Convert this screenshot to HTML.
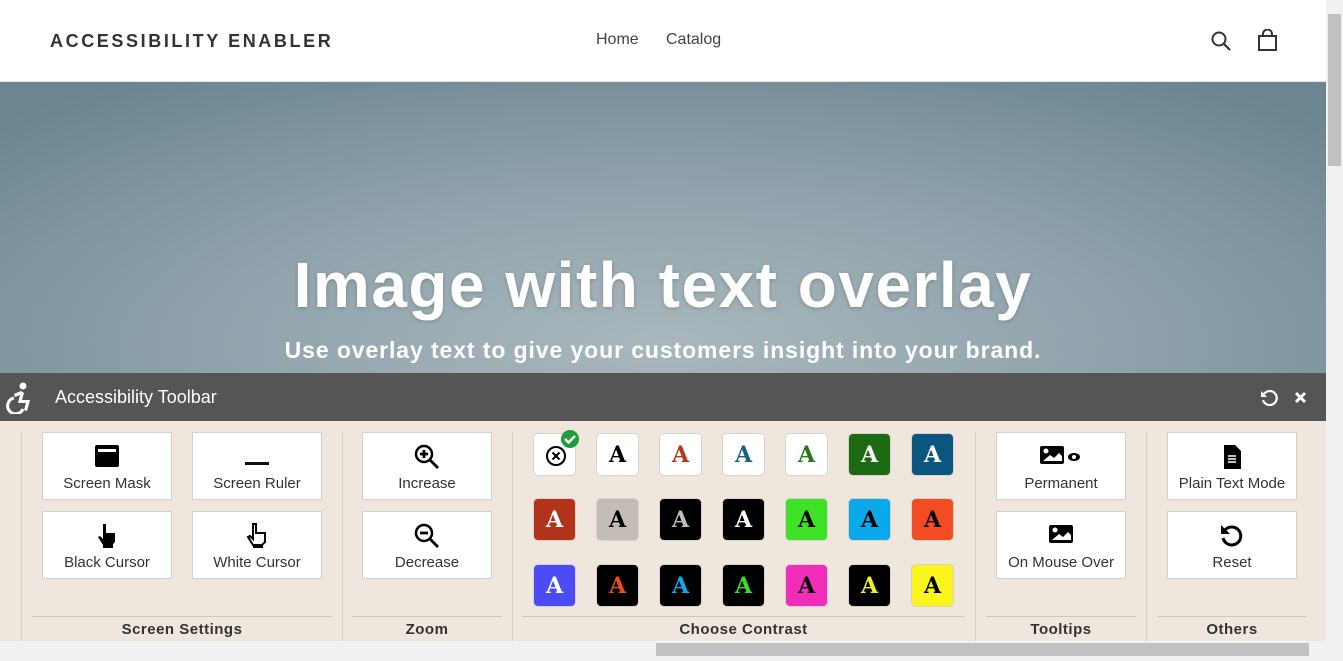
<html><head><style>
*{margin:0;padding:0;box-sizing:border-box}
body{width:1343px;height:661px;overflow:hidden;font-family:"Liberation Sans",sans-serif;background:#fff;position:relative}
.hdr{position:absolute;left:0;top:0;width:1326px;height:82px;background:#fff;border-bottom:1px solid #e6e6e6}
.logo{position:absolute;left:50px;top:31px;font-size:18px;font-weight:bold;letter-spacing:2.6px;color:#333}
.nav{position:absolute;top:31px;font-size:16px;color:#444}
.hero{position:absolute;left:0;top:82px;width:1326px;height:291px;background:radial-gradient(ellipse 70% 110% at 50% 90%,#a9b7bd 0%,#8fa2ab 50%,#6b8591 100%)}
.hero h1{position:absolute;left:0;width:1326px;top:166px;text-align:center;color:#fff;font-size:64px;font-weight:bold;letter-spacing:1.5px;text-shadow:0 1px 4px rgba(0,0,0,.2)}
.hero p{position:absolute;left:0;width:1326px;top:255px;text-align:center;color:#fff;font-size:23px;font-weight:bold;letter-spacing:.9px}
.tb{position:absolute;left:0;top:373px;width:1326px;height:48px;background:#555}
.tb span{position:absolute;left:55px;top:14px;color:#fff;font-size:18px}
.panel{position:absolute;left:0;top:421px;width:1326px;height:220px;background:#efe6dd}
.vd{position:absolute;top:432px;width:1px;height:209px;background:#d6cdc4}
.btn{position:absolute;width:130px;height:68px;background:#fff;border:1px solid #d5d0cb;text-align:center;font-size:15px;color:#333}
.btn svg{position:absolute;left:50%;top:11px;transform:translateX(-50%)}
.btn div{position:absolute;left:0;right:0;top:42px}
.sl{position:absolute;top:616px;height:1px;background:#d0c8bf}
.lab{position:absolute;top:621px;font-size:15px;font-weight:bold;color:#333;text-align:center;letter-spacing:.5px}
.c{position:absolute;width:43px;height:43px;border-radius:5px;border:1px solid #d8d2cc;text-align:center;line-height:43px;font-family:"DejaVu Serif","Liberation Serif",serif;font-weight:bold;font-size:22px}
.vs{position:absolute;left:1326px;top:0;width:17px;height:661px;background:#f1f1f1}
.hs{position:absolute;left:0;top:641px;width:1326px;height:20px;background:#f1f1f1}
</style></head><body>
<div class="hdr">
<div class="logo">ACCESSIBILITY ENABLER</div>
<div class="nav" style="left:596px">Home</div>
<div class="nav" style="left:666px">Catalog</div>
<svg style="position:absolute;left:1210px;top:30px" width="22" height="22" viewBox="0 0 22 22"><circle cx="9" cy="9" r="6.5" fill="none" stroke="#333" stroke-width="2"/><path d="M14 14l6 6" stroke="#333" stroke-width="2.2"/></svg>
<svg style="position:absolute;left:1257px;top:29px" width="21" height="22" viewBox="0 0 21 22"><path d="M2 7h17v14H2z M6 7V5a4.5 4.5 0 0 1 9 0v2" fill="none" stroke="#333" stroke-width="2"/></svg>
</div>
<div class="hero"><h1>Image with text overlay</h1><p>Use overlay text to give your customers insight into your brand.</p></div>
<div class="tb">
<svg style="position:absolute;left:5px;top:9px" width="28" height="32" viewBox="0 0 28 32"><circle cx="18" cy="4" r="3.5" fill="#fff"/><path d="M16 9l-7 3 1 3 5-2-2 8h8l-2 7 3 1 3-11h-8l2-7z" fill="#fff"/><path d="M9 16a8 8 0 1 0 9 11" fill="none" stroke="#fff" stroke-width="3"/></svg>
<span>Accessibility Toolbar</span>
<svg style="position:absolute;left:1260px;top:16px" width="18" height="18" viewBox="0 0 18 18"><path d="M4 5A7 7 0 1 1 3 11" fill="none" stroke="#fff" stroke-width="2.2"/><path d="M1 2v6h6z" fill="#fff"/></svg>
<svg style="position:absolute;left:1294px;top:18px" width="13" height="13" viewBox="0 0 13 13"><path d="M2 2l9 9M11 2l-9 9" stroke="#fff" stroke-width="3"/></svg>
</div>
<div class="panel"></div>
<div class="vd" style="left:21px"></div><div class="vd" style="left:342px"></div><div class="vd" style="left:512px"></div><div class="vd" style="left:975px"></div><div class="vd" style="left:1146px"></div>
<div class="btn" style="left:42px;top:432px"><svg width="26" height="24" viewBox="0 0 26 24"><rect x="1" y="1" width="24" height="22" rx="2" fill="#000"/><rect x="4" y="5" width="18" height="3" fill="#fff"/></svg><div>Screen Mask</div></div>
<div class="btn" style="left:192px;top:432px"><svg width="26" height="24" viewBox="0 0 26 24"><rect x="1" y="18" width="24" height="3" fill="#111"/></svg><div>Screen Ruler</div></div>
<div class="btn" style="left:42px;top:511px"><svg width="22" height="26" viewBox="0 0 22 26"><path d="M7 1h3v9h9v9l-3 3H7l-5-8 2-1 3 3z" fill="#000"/><rect x="7" y="21" width="10" height="4" fill="#000"/></svg><div>Black Cursor</div></div>
<div class="btn" style="left:192px;top:511px"><svg width="22" height="26" viewBox="0 0 22 26"><path d="M7 1h3v9h9v9l-3 3H7l-5-8 2-1 3 3z" fill="#fff" stroke="#000" stroke-width="2"/><rect x="7" y="21" width="10" height="4" fill="#000"/></svg><div>White Cursor</div></div>
<div class="btn" style="left:362px;top:432px"><svg width="26" height="26" viewBox="0 0 26 26"><circle cx="10" cy="10" r="8" fill="none" stroke="#000" stroke-width="2.5"/><path d="M16 16l8 8M10 6v8M6 10h8" stroke="#000" stroke-width="2.8"/></svg><div>Increase</div></div>
<div class="btn" style="left:362px;top:511px"><svg width="26" height="26" viewBox="0 0 26 26"><circle cx="10" cy="10" r="8" fill="none" stroke="#000" stroke-width="2.5"/><path d="M16 16l8 8M6 10h8" stroke="#000" stroke-width="2.8"/></svg><div>Decrease</div></div>
<div class="btn" style="left:996px;top:432px"><svg width="44" height="24" viewBox="0 0 44 24"><rect x="1" y="2" width="24" height="18" rx="2" fill="#000"/><circle cx="7" cy="7" r="2.5" fill="#fff"/><path d="M4 17l7-6 4 3 5-5 3 3v5z" fill="#fff"/><ellipse cx="35" cy="13" rx="6" ry="4" fill="#000"/><circle cx="35" cy="13" r="2" fill="#fff"/></svg><div>Permanent</div></div>
<div class="btn" style="left:996px;top:511px"><svg width="26" height="24" viewBox="0 0 26 24"><rect x="1" y="2" width="24" height="18" rx="2" fill="#000"/><circle cx="7" cy="7" r="2.5" fill="#fff"/><path d="M4 17l7-6 4 3 5-5 3 3v5z" fill="#fff"/></svg><div>On Mouse Over</div></div>
<div class="btn" style="left:1167px;top:432px"><svg width="20" height="26" viewBox="0 0 20 26"><path d="M2 1h11l6 6v18H2z" fill="#000"/><path d="M6 12h8M6 15h8M6 18h8" stroke="#fff" stroke-width="1.5"/></svg><div>Plain Text Mode</div></div>
<div class="btn" style="left:1167px;top:511px"><svg width="26" height="26" viewBox="0 0 26 26"><path d="M6 7A9 9 0 1 1 4 15" fill="none" stroke="#000" stroke-width="3"/><path d="M2 2v9h9z" fill="#000"/></svg><div>Reset</div></div>
<div class="c" style="left:533px;top:433px;background:#fff"><svg style="position:absolute;left:11px;top:11px" width="22" height="22" viewBox="0 0 22 22"><circle cx="11" cy="11" r="9" fill="none" stroke="#000" stroke-width="2"/><path d="M7.5 7.5l7 7M14.5 7.5l-7 7" stroke="#000" stroke-width="2"/></svg><svg style="position:absolute;left:26px;top:-5px" width="20" height="20" viewBox="0 0 20 20"><circle cx="10" cy="10" r="9" fill="#1e9e3a"/><path d="M5 10l3.5 3.5L15 7" fill="none" stroke="#fff" stroke-width="2.5"/></svg></div>
<div class="c" style="left:596px;top:433px;background:#fff;color:#000">A</div>
<div class="c" style="left:659px;top:433px;background:#fff;color:#b5361c">A</div>
<div class="c" style="left:722px;top:433px;background:#fff;color:#1a5f8a">A</div>
<div class="c" style="left:785px;top:433px;background:#fff;color:#237a1c">A</div>
<div class="c" style="left:848px;top:433px;background:#1e6a12;color:#fff">A</div>
<div class="c" style="left:911px;top:433px;background:#0a5680;color:#fff">A</div>
<div class="c" style="left:533px;top:498px;background:#b2321a;color:#fff">A</div>
<div class="c" style="left:596px;top:498px;background:#c3bdb8;color:#000">A</div>
<div class="c" style="left:659px;top:498px;background:#000;color:#c3bdb8">A</div>
<div class="c" style="left:722px;top:498px;background:#000;color:#fff">A</div>
<div class="c" style="left:785px;top:498px;background:#3ee226;color:#000">A</div>
<div class="c" style="left:848px;top:498px;background:#0aa9ea;color:#000">A</div>
<div class="c" style="left:911px;top:498px;background:#f54b22;color:#000">A</div>
<div class="c" style="left:533px;top:564px;background:#4c4cf7;color:#fff">A</div>
<div class="c" style="left:596px;top:564px;background:#000;color:#f04a20">A</div>
<div class="c" style="left:659px;top:564px;background:#000;color:#13a8ea">A</div>
<div class="c" style="left:722px;top:564px;background:#000;color:#38e020">A</div>
<div class="c" style="left:785px;top:564px;background:#f02cb8;color:#000">A</div>
<div class="c" style="left:848px;top:564px;background:#000;color:#f5ef1c">A</div>
<div class="c" style="left:911px;top:564px;background:#fbf51e;color:#000">A</div>
<div class="sl" style="left:32px;width:300px"></div><div class="sl" style="left:352px;width:150px"></div><div class="sl" style="left:522px;width:443px"></div><div class="sl" style="left:986px;width:150px"></div><div class="sl" style="left:1157px;width:150px"></div>
<div class="lab" style="left:32px;width:300px">Screen Settings</div>
<div class="lab" style="left:352px;width:150px">Zoom</div>
<div class="lab" style="left:522px;width:443px">Choose Contrast</div>
<div class="lab" style="left:986px;width:150px">Tooltips</div>
<div class="lab" style="left:1157px;width:150px">Others</div>
<div class="hs"><div style="position:absolute;left:656px;top:2px;width:653px;height:13px;background:#c1c1c1"></div></div>
<div class="vs"><div style="position:absolute;left:2px;top:14px;width:13px;height:152px;background:#c1c1c1"></div></div>
</body></html>
